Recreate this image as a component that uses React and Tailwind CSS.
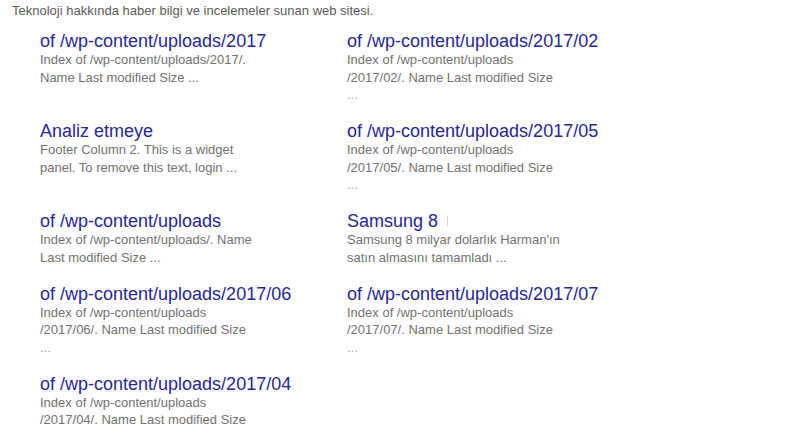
import React from 'react';

// sitelinks grid, two columns
const links = [
  { title: 'of /wp-content/uploads/2017', lines: ['Index of /wp-content/uploads/2017/.', 'Name Last modified Size ...'] },
  { title: 'of /wp-content/uploads/2017/02', lines: ['Index of /wp-content/uploads', '/2017/02/. Name Last modified Size', '...'] },
  { title: 'Analiz etmeye', lines: ['Footer Column 2. This is a widget', 'panel. To remove this text, login ...'] },
  { title: 'of /wp-content/uploads/2017/05', lines: ['Index of /wp-content/uploads', '/2017/05/. Name Last modified Size', '...'] },
  { title: 'of /wp-content/uploads', lines: ['Index of /wp-content/uploads/. Name', 'Last modified Size ...'] },
  { title: 'Samsung 8', bar: true, lines: ["Samsung 8 milyar dolarlık Harman'ın", 'satın almasını tamamladı ...'] },
  { title: 'of /wp-content/uploads/2017/06', lines: ['Index of /wp-content/uploads', '/2017/06/. Name Last modified Size', '...'] },
  { title: 'of /wp-content/uploads/2017/07', lines: ['Index of /wp-content/uploads', '/2017/07/. Name Last modified Size', '...'] },
  { title: 'of /wp-content/uploads/2017/04', lines: ['Index of /wp-content/uploads', '/2017/04/. Name Last modified Size'] },
];

function Sitelink({ item }) {
  return (
    <div className="pb-[17.5px]">
      <div className="flex items-center text-[18px] leading-[20px] text-[#29278a]">
        <span>{item.title}</span>
        {item.bar && <span className="ml-[9px] inline-block w-px h-[10px] bg-[#d4d4d4]"></span>}
      </div>
      {item.lines.map((l, i) => (
        <div
          key={i}
          className={
            'text-[13px] leading-[17.5px] ' +
            (l === '...' ? 'text-[#a0a0a0]' : 'text-[#717171]')
          }
        >
          {l}
        </div>
      ))}
    </div>
  );
}

export default function App() {
  return (
    <div
      className="w-[800px] h-[440px] overflow-hidden bg-white"
      style={{ fontFamily: '"Liberation Sans", Arial, sans-serif' }}
    >
      <div className="pl-[12px] pt-[2px] text-[13px] leading-[17px] text-[#5a5a5a]">
        Teknoloji hakkında haber bilgi ve incelemeler sunan web sitesi.
      </div>
      <div className="grid grid-cols-[307px_1fr] pl-[40px] pt-[12px]">
        {links.map((item, i) => (
          <Sitelink key={i} item={item} />
        ))}
      </div>
    </div>
  );
}
